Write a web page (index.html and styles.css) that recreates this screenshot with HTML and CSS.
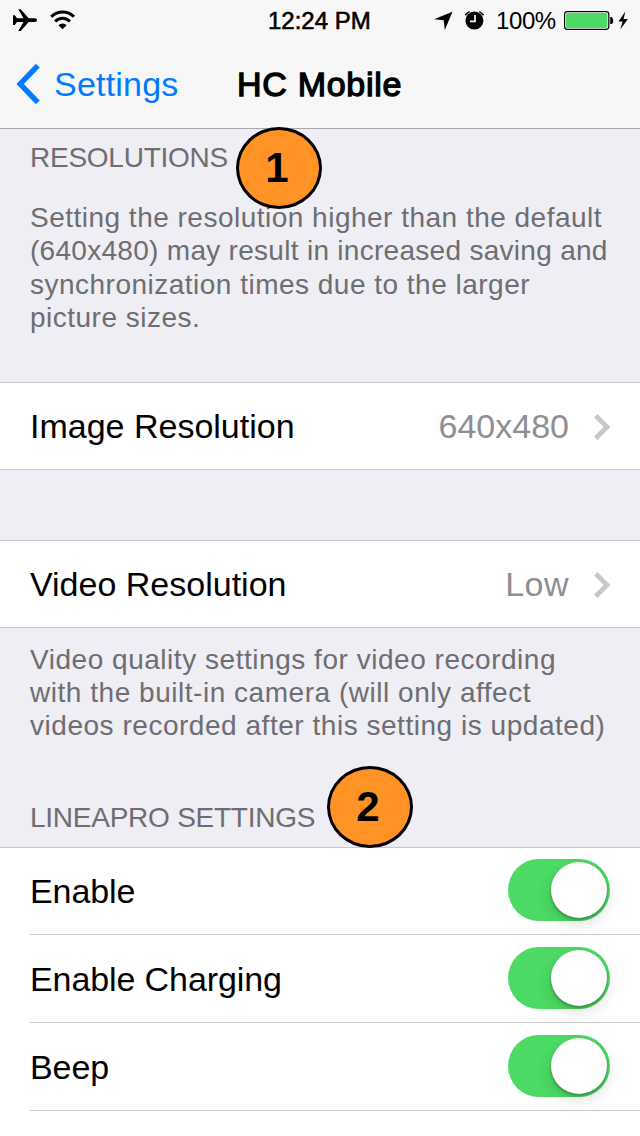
FILE: index.html
```html
<!DOCTYPE html>
<html lang="en">
<head>
<meta charset="utf-8">
<title>HC Mobile</title>
<link rel="stylesheet" href="styles.css">
</head>
<body>
<header class="top">
  <div class="status">
    <svg class="status-icons" width="90" height="40" viewBox="0 0 90 40">
      <path d="M13 15.2h1.8l2.2 3h6.6L18.2 9.2h2.5l8 9h6.3a2 1.9 0 0 1 0 3.8h-6.3l-8 9h-2.5l5.4-9h-6.6l-2.2 3H13z"/>
      <g fill="none" stroke="#000">
        <path d="M51.2 16.8a16.2 16.2 0 0 1 22.8 0" stroke-width="3"/>
        <path d="M55.2 21.4a10.3 10.3 0 0 1 14.7 0" stroke-width="2.9"/>
      </g>
      <path d="M58.4 25.2a6 6 0 0 1 8.3 0L62.55 29.2z"/>
    </svg>
    <span class="time">12:24 PM</span>
    <div class="status-right">
      <svg width="60" height="40" viewBox="430 0 60 40">
        <path d="M452.5 11.8L444.8 30L443.7 20.2L434 19.3z"/>
        <circle cx="474.4" cy="20.6" r="9"/>
        <path d="M465.3 15.2a11 11 0 0 1 4.2-3.6M479.3 11.6a11 11 0 0 1 4.2 3.6" fill="none" stroke="#000" stroke-width="1.5"/>
        <path d="M475 15v6.4h-5" fill="none" stroke="#f7f7f7" stroke-width="1.7"/>
      </svg>
      <span class="percent">100%</span>
      <svg width="80" height="40" viewBox="560 0 80 40">
        <rect x="564.6" y="11.6" width="44.2" height="17.8" rx="2.8" fill="#fff" stroke="#000" stroke-width="1.2"/>
        <rect x="566" y="13" width="41.4" height="15" rx="1.6" fill="#4cd964"/>
        <path d="M610.2 17h1.4q1.6 1.2 1.6 3.6t-1.6 3.4h-1.4z"/>
        <path d="M625.3 11.5L618.5 21.4h4.1l-2.3 8.2l7.6-10.7h-4.3z"/>
      </svg>
    </div>
  </div>
  <div class="nav">
    <svg class="back" width="26" height="44" viewBox="0 0 26 44"><path d="M22.8 3.7L5.2 22L22.8 40.3" fill="none" stroke="#007aff" stroke-width="5.4"/></svg>
    <a class="back-label">Settings</a>
    <h1 class="title">HC Mobile</h1>
  </div>
</header>
<main>
  <section class="intro">
    <h2 class="heading">RESOLUTIONS</h2>
    <p class="note">Setting the resolution higher than the default<br><span class="tight">(640x480) may result in increased saving and</span><br>synchronization times due to the larger<br>picture sizes.</p>
    <span class="badge badge-one">1</span>
  </section>
  <div class="cell boxed">
    <span class="label">Image Resolution</span><span class="value">640x480</span>
    <svg class="chevron" width="17" height="26" viewBox="0 0 17 26"><path d="M1.8 1.8L13 13L1.8 24.2" fill="none" stroke="#c7c7cc" stroke-width="4.8"/></svg>
  </div>
  <div class="cell boxed second">
    <span class="label">Video Resolution</span><span class="value low">Low</span>
    <svg class="chevron" width="17" height="26" viewBox="0 0 17 26"><path d="M1.8 1.8L13 13L1.8 24.2" fill="none" stroke="#c7c7cc" stroke-width="4.8"/></svg>
  </div>
  <section class="linea">
    <p class="note">Video quality settings for video recording<br>with the built-in camera (will only affect<br>videos recorded after this setting is updated)</p>
    <h2 class="heading linea-heading">LINEAPRO SETTINGS</h2>
    <span class="badge badge-two">2</span>
  </section>
  <div class="list">
    <div class="item"><span class="label">Enable</span><span class="toggle"><i class="knob"></i></span></div>
    <div class="item"><span class="label">Enable Charging</span><span class="toggle"><i class="knob"></i></span></div>
    <div class="item"><span class="label">Beep</span><span class="toggle"><i class="knob"></i></span></div>
  </div>
</main>
</body>
</html>
```
FILE: styles.css
```css
* { box-sizing: border-box; }
body {
  margin: 0;
  width: 640px;
  height: 1136px;
  overflow: hidden;
  background: #efeef4;
  font-family: "Liberation Sans", Arial, sans-serif;
  color: #000;
}
h1, h2, p { margin: 0; font-weight: 400; }
svg { display: block; flex: none; }
.top { height: 129px; background: #f7f7f7; border-bottom: 1px solid #a9a9ac; }
.status { display: flex; height: 40px; font-size: 24px; line-height: 42px; white-space: nowrap; }
.time { margin-left: 178px; width: 162px; -webkit-text-stroke: .6px #000; }
.status-right { display: flex; }
.percent { width: 64px; margin-left: 6px; letter-spacing: -.4px; }
.nav { display: flex; height: 88px; font-size: 34px; line-height: 88px; white-space: nowrap; }
.back { margin: 22px 0 0 15px; }
.back-label { width: 183px; margin-left: 13px; letter-spacing: .2px; color: #007aff; }
.title { font-size: 34px; line-height: 88px; letter-spacing: .7px; -webkit-text-stroke: 1.3px #000; }
.intro { position: relative; height: 253px; padding: 12px 30px 0; }
.heading { font-size: 28px; line-height: 33px; letter-spacing: -.25px; color: #6d6d72; }
.note { font-size: 28px; line-height: 33.3px; letter-spacing: .49px; color: #6d6d72; white-space: nowrap; }
.intro .note { margin-top: 27px; }
.tight { letter-spacing: .29px; }
.badge {
  position: absolute;
  z-index: 1;
  width: 86px;
  height: 82px;
  padding-right: 4px;
  border: 3px solid #000;
  border-radius: 50%;
  background: #ff9326;
  font-size: 42px;
  font-weight: 700;
  line-height: 76px;
  text-align: center;
}
.badge-one { left: 236px; top: -2px; }
.badge-two { left: 327px; top: 138px; }
.cell { display: flex; height: 88px; padding: 0 29px 0 30px; background: #fff; border: solid #c8c7cc; border-width: 1px 0; font-size: 34px; line-height: 86px; }
.second { margin-top: 70px; }
.label { flex: 1; }
.value { color: #8e8e93; }
.low { letter-spacing: .5px; }
.chevron { margin: 31px 0 0 25px; }
.linea { position: relative; height: 219px; padding: 15px 30px 0; }
.linea .note { line-height: 33px; letter-spacing: .53px; }
.linea-heading { margin-top: 59px; }
.list { height: 289px; padding-left: 30px; background: #fff; border-top: 1px solid #c8c7cc; }
.item { display: flex; align-items: center; height: 88px; padding-right: 30px; border-bottom: 1px solid #c8c7cc; font-size: 34px; line-height: 86px; letter-spacing: -.1px; }
.item:first-child { height: 87px; }
.toggle { display: flex; width: 102px; height: 62px; padding: 3px; justify-content: flex-end; border-radius: 31px; background: #4cd964; margin-bottom: 2px; }
.knob { width: 56px; height: 56px; border-radius: 50%; background: #fff; box-shadow: 0 2px 3px rgba(0,0,0,.28), 0 6px 16px rgba(0,0,0,.13); }
```
